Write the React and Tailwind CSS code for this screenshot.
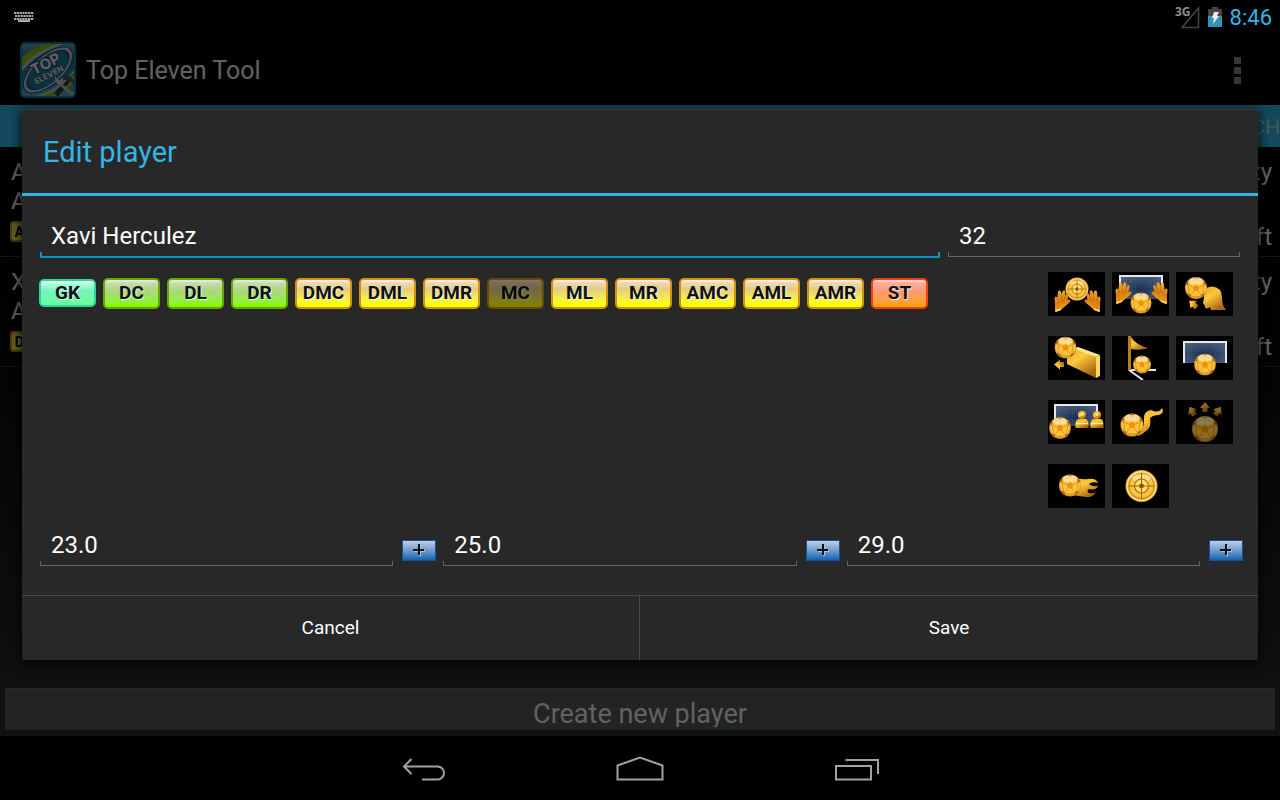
import React, { useState } from "react";

const positions = [
  { id: "GK", kind: "keeper" },
  { id: "DC", kind: "defence" },
  { id: "DL", kind: "defence" },
  { id: "DR", kind: "defence" },
  { id: "DMC", kind: "midfield" },
  { id: "DML", kind: "midfield" },
  { id: "DMR", kind: "midfield" },
  { id: "MC", kind: "midfield" },
  { id: "ML", kind: "midfield" },
  { id: "MR", kind: "midfield" },
  { id: "AMC", kind: "midfield" },
  { id: "AML", kind: "midfield" },
  { id: "AMR", kind: "midfield" },
  { id: "ST", kind: "attack" },
];

const badgeStyles = {
  keeper:
    "h-7 border-[#2fd596] bg-linear-to-b from-[#b4ffe0] from-10% via-[#74f3bd] via-40% to-[#68ff9e] to-95%",
  defence:
    "h-[31px] border-[#62a800] bg-linear-to-b from-[#d0dcb8] from-5% via-[#abd67c] via-40% to-[#86f800] to-90%",
  midfield:
    "h-[31px] border-[#d0920c] bg-linear-to-b from-[#eedcc4] from-5% via-[#e6cc7c] via-35% to-[#ffff00] to-85%",
  attack:
    "h-[31px] border-[#f4400c] bg-linear-to-b from-[#ffb0a8] from-5% via-[#ff9a70] via-45% to-[#ffa212] to-90%",
};

const players = [
  { name: "A", team: "A", position: "AMC", skill: "ty", foot: "ft" },
  { name: "X", team: "A", position: "DMC", skill: "ty", foot: "ft" },
];

const Ball = ({ cx, cy, r }) => (
  <g transform={`translate(${cx} ${cy}) scale(${r / 10})`}>
    <circle r="10" fill="url(#ball)" />
    <path d="M0-3.2 3-1 1.9 2.7H-1.9L-3-1Z" fill="#f0900c" />
    <path
      d="M-3-9.5 0-7.6 3-9.5ZM9.4-3.4 7.2-2.6 6.6-6 8-6ZM8.4 5.4 6 5 4 7.6 5.6 8.3ZM-8.4 5.4-6 5-4 7.6-5.6 8.3ZM-9.4-3.4-7.2-2.6-6.6-6-8-6Z"
      fill="#b8650a"
    />
    <path
      d="M0-7.6V-3.2M3-1 7.2-2.6M1.9 2.7 4.6 6.4M-1.9 2.7-4.6 6.4M-3-1-7.2-2.6M-6.6-6 0-7.6 6.6-6M7.2-2.6 6 5M4 7.6H-4M-7.2-2.6-6 5"
      fill="none"
      stroke="#d8901a"
      strokeWidth="0.8"
    />
    <ellipse cy="-6" rx="6.5" ry="3" fill="#fff" opacity="0.5" />
  </g>
);

const Target = ({ cx, cy, r }) => (
  <g transform={`translate(${cx} ${cy}) scale(${r / 10})`}>
    <circle r="10" fill="#d9a438" />
    <circle r="9" fill="url(#ball)" stroke="#ffe58c" strokeWidth="0.8" />
    <circle r="7.8" fill="none" stroke="#c88a1c" strokeWidth="0.6" />
    <ellipse cy="-5" rx="6" ry="2.5" fill="#fff" opacity="0.4" />
    <circle r="4.4" fill="#ffdf6a" stroke="#a8660d" strokeWidth="0.7" />
    <path d="M0-8V8M-8 0H8" stroke="#9a600f" strokeWidth="0.6" />
    <circle r="1.5" fill="#8b5409" />
  </g>
);

const Glove = ({ x, y, flip }) => (
  <g transform={`translate(${x} ${y}) scale(${flip ? -1 : 1} 1)`}>
    <path
      d="M1 19 1 12Q-.5 7 2 6.500L3.500 7.500 4 2Q5-.5 7 1.500L7.500 4.500 8.500 1.500Q10.500-1 11.500 2L11 6 12.500 3.500Q14.500 2 14.800 4.500L13.500 9.500 15 9.500Q18 10 15 13L9 18 7 20 1 22Z"
      fill="url(#glove)"
    />
    <path d="M3 18 7 19M3.500 8 5 12M7.500 5 7.500 11M11 6 9.500 12" stroke="#b85f08" strokeWidth="0.6" />
    <path d="M1 20 7 18 7 20 2 22Z" fill="#ffd25c" />
  </g>
);

const Goal = ({ x, y, height }) => (
  <g transform={`translate(${x} ${y})`}>
    <path d={`M1 1H43V${height}H1Z`} fill="url(#net)" />
    <path d={`M1 1H43V${height}H1Z`} fill="url(#mesh)" />
    <path d={`M1 ${height}V1H43V${height}`} fill="none" stroke="#e4e9f2" strokeWidth="2" />
  </g>
);

const Arrow = ({ x, y, angle }) => (
  <path
    d="M0-5 5 1H2.5V5H-2.5V1H-5Z"
    transform={`translate(${x} ${y}) rotate(${angle})`}
    fill="url(#gold)"
  />
);

const Fan = ({ x }) => (
  <g transform={`translate(${x} 11)`}>
    <circle cx="7" cy="4" r="4" fill="url(#gold)" />
    <circle cx="7" cy="3.5" r="1.5" fill="#ffe48a" />
    <path d="M3 8H11Q13 9 13.5 12V17H.5V12Q1 9 3 8Z" fill="url(#gold)" />
    <path d="M1 12.5H13" stroke="#fff0a0" strokeWidth="1.4" />
  </g>
);

const skills = [
  {
    name: "Shot stopper",
    art: (
      <>
        <Target cx={29} cy={17} r={11.5} />
        <Glove x={6} y={18} />
        <Glove x={53} y={18} flip />
      </>
    ),
  },
  {
    name: "Penalty stopper",
    art: (
      <>
        <Goal x={7} y={3} height={24} />
        <Glove x={3} y={10} />
        <Glove x={56} y={10} flip />
        <Ball cx={29} cy={31} r={10.5} />
      </>
    ),
  },
  {
    name: "Aerial presence",
    art: (
      <>
        <path
          d="M28 26Q26 15 36 14.5 46 15 46 26 46 33 50 38H35L34 35Q30 38 29 35L28 32 27 31Z"
          fill="url(#gold)"
        />
        <Ball cx={20} cy={16} r={11} />
        <Arrow x={17} y={32} angle={-50} />
      </>
    ),
  },
  {
    name: "Defensive wall",
    art: (
      <>
        <path d="M19 16 30 11 48 21V42L19 28Z" fill="url(#gold)" />
        <path d="M48 21 52 19V40L48 42Z" fill="#ffd95a" />
        <path d="M26 13 30 11 52 19 48 21Z" fill="#ffe78a" />
        <Ball cx={17.5} cy={11.5} r={10.8} />
        <Arrow x={11} y={28.5} angle={-90} />
      </>
    ),
  },
  {
    name: "Corner specialist",
    art: (
      <>
        <path d="M17 34H44M17 34 31 44" stroke="#dfe4f0" strokeWidth="2" />
        <path d="M16 0H19V34H16Z" fill="#b97f1c" />
        <path d="M19 1Q24 9 36 12 29 15 19 13Z" fill="url(#gold)" />
        <Ball cx={30} cy={28.5} r={9} />
      </>
    ),
  },
  {
    name: "Penalty kick specialist",
    art: (
      <>
        <Goal x={7} y={5} height={22} />
        <Ball cx={29} cy={28.5} r={10.8} />
      </>
    ),
  },
  {
    name: "Free kick specialist",
    art: (
      <>
        <Goal x={6} y={4} height={22} />
        <Fan x={27} />
        <Fan x={42} />
        <Ball cx={12} cy={28} r={10.8} />
      </>
    ),
  },
  {
    name: "Dribbler",
    art: (
      <>
        <path
          d="M26 34Q33 27 32 20 31 11 39 10 47 14 50 8 53 13 47 15 41 15 38 18 40 27 34 31 30 35 26 36Z"
          fill="url(#gold)"
        />
        <Ball cx={20} cy={25} r={11.5} />
      </>
    ),
  },
  {
    name: "Playmaker",
    off: true,
    art: (
      <>
        <Ball cx={29} cy={29} r={13} />
        <Arrow x={16} y={11} angle={-32} />
        <Arrow x={29} y={7} angle={0} />
        <Arrow x={42} y={11} angle={32} />
      </>
    ),
  },
  {
    name: "Shadow striker",
    art: (
      <>
        <path
          d="M24 13Q34 16 40 15 48 14 50 19 44 17 41 20 44 23 50 22 48 27 41 25 38 27 41 29 46 30 48 28 45 34 38 33L24 31Z"
          fill="url(#gold)"
        />
        <Ball cx={22} cy={21.5} r={11} />
      </>
    ),
  },
  { name: "One-on-one scorer", art: <Target cx={29.5} cy={22} r={16} /> },
];

// Gradients used by every skill tile
const SkillPaints = () => (
  <svg className="absolute size-0" aria-hidden="true">
    <defs>
      <radialGradient id="ball" cx="50%" cy="45%" r="55%">
        <stop offset="0" stopColor="#ffc62e" />
        <stop offset="0.75" stopColor="#fcc444" />
        <stop offset="1" stopColor="#c98a1c" />
      </radialGradient>
      <linearGradient id="gold" x1="0" y1="0" x2="0.6" y2="1">
        <stop offset="0" stopColor="#e0a52a" />
        <stop offset="0.45" stopColor="#ffc93e" />
        <stop offset="1" stopColor="#a8660f" />
      </linearGradient>
      <linearGradient id="glove" x1="0" y1="0" x2="0.3" y2="1">
        <stop offset="0" stopColor="#f3b03c" />
        <stop offset="0.6" stopColor="#d97d10" />
        <stop offset="1" stopColor="#f0a520" />
      </linearGradient>
      <radialGradient id="net" cx="50%" cy="60%" r="65%">
        <stop offset="0" stopColor="#122c54" />
        <stop offset="1" stopColor="#4c5a74" />
      </radialGradient>
      <pattern id="mesh" width="2" height="2" patternUnits="userSpaceOnUse">
        <path d="M0 0H1V1H0Z" fill="#8ea0bf" opacity="0.15" />
      </pattern>
    </defs>
  </svg>
);

const AppLogo = () => (
  <svg className="size-[58px]" viewBox="0 0 58 58" aria-hidden="true">
    <defs>
      <linearGradient id="logo" x1="0" y1="0" x2="0" y2="1">
        <stop offset="0" stopColor="#6f9fbc" />
        <stop offset="0.3" stopColor="#1f6f9a" />
        <stop offset="0.7" stopColor="#1a86a8" />
        <stop offset="1" stopColor="#5fb0c4" />
      </linearGradient>
      <clipPath id="logoClip">
        <rect x="3" y="3" width="52" height="52" rx="2" />
      </clipPath>
    </defs>
    <rect x="2" y="2" width="54" height="54" rx="4" fill="url(#logo)" stroke="#0a789f" strokeWidth="2" />
    <g clipPath="url(#logoClip)">
      <path d="M2 30Q14 10 42 2H30Q10 8 2 18Z" fill="#8fb81c" />
      <path d="M2 32Q16 12 48 2H42Q14 10 2 28Z" fill="#b5d0b8" />
      <path d="M18 56Q44 50 56 32V40Q48 50 38 56Z" fill="#8fb81c" />
      <path d="M14 56Q42 48 56 27V30Q44 50 20 56Z" fill="#b5d0b8" />
      <g transform="rotate(-42 29 29)">
        <ellipse cx="29" cy="29" rx="31" ry="15" fill="#124f6c" />
        <ellipse cx="29" cy="29" rx="30" ry="14" fill="#c6ccd4" />
        <ellipse cx="29" cy="29" rx="27" ry="12.5" fill="#155a7c" />
        <ellipse cx="29" cy="29" rx="24" ry="12.5" fill="#1b7c9c" />
      </g>
      <g
        transform="rotate(-27 28 28)"
        fill="#e8e8ee"
        fontFamily="Inter, sans-serif"
        fontWeight="800"
        textAnchor="middle"
      >
        <text x="29" y="28" fontSize="15" stroke="#0d3e58" strokeWidth="2" paintOrder="stroke">
          TOP
        </text>
        <text x="27" y="37" fontSize="8" stroke="#0d3e58" strokeWidth="1" paintOrder="stroke">
          ELEVEN
        </text>
      </g>
      <path d="M52 37 44 46" stroke="#25313b" strokeWidth="3" />
      <path d="M44 46 37 54" stroke="#20395f" strokeWidth="5" />
      <path d="M43 35 50 35Q55 37 55 43L51 40 46 39Z" fill="#4b5359" />
      <path d="M39 41 54 54" stroke="#b4babd" strokeWidth="3" />
      <path d="M36 35V40L40 44 44 41V36L41 39H39Z" fill="#c5cbd0" />
    </g>
  </svg>
);

const StatusBar = () => (
  <header className="flex h-[34px] items-center justify-between bg-black pr-2 pl-[14px]">
    <svg className="h-3 w-5" viewBox="0 0 20 12" aria-label="Keyboard connected">
      <path d="M0 2H20M1 5H19M0 8H20" stroke="#a8a8a8" strokeWidth="2" strokeDasharray="2.2 0.6" />
      <path d="M4 10H16" stroke="#a8a8a8" strokeWidth="2" />
    </svg>
    <div className="flex items-center pt-px">
      <svg className="h-6 w-[25px]" viewBox="0 0 25 24" aria-label="3G, no signal">
        <text x="0" y="10" fontSize="12" fontWeight="bold" fontFamily="Open Sans, sans-serif" fill="#8c8c8c">
          3G
        </text>
        <path d="M7 21.5H23.500V2Z" fill="none" stroke="#454545" strokeWidth="1.5" />
      </svg>
      <svg className="mr-2 ml-2 h-[22px] w-[14px]" viewBox="0 0 14 22" aria-label="Battery charging">
        <path d="M4 0H10V2H14V10H0V2H4Z" fill="#454545" />
        <path d="M0 9H14V20H0Z" fill="#3392b8" />
        <path d="M6 5H11L9 9H11L5 17 6 11H4Z" fill="#eee" />
      </svg>
      <span className="text-[22px] leading-[33px] text-[#33b5e5]">8:46</span>
    </div>
  </header>
);

const NavBar = () => (
  <footer className="flex h-16 items-center justify-center gap-[132px] bg-black pt-1">
    <button aria-label="Back" className="flex w-[85px] justify-center">
      <svg className="h-7 w-12" viewBox="0 0 48 28" fill="none" stroke="#a3a3a3" strokeWidth="2">
        <path d="M12.5 3 5 10.500 12.5 18M5 10.500H38.500A6.500 6.500 0 0 1 38.500 23.500H23" />
      </svg>
    </button>
    <button aria-label="Home" className="flex w-[85px] justify-center">
      <svg className="h-7 w-12" viewBox="0 0 48 28" fill="none" stroke="#a3a3a3" strokeWidth="2">
        <path d="M1.500 23.500V9.500L24 1.500 46.500 9.500V23.500Z" />
      </svg>
    </button>
    <button aria-label="Recent apps" className="flex w-[85px] justify-center">
      <svg className="h-7 w-12" viewBox="0 0 48 28" fill="none" stroke="#a3a3a3" strokeWidth="2">
        <path d="M3 10H38V23.500H3ZM12.500 4H45V18" />
      </svg>
    </button>
  </footer>
);

const PlayerList = () => (
  <ul>
    {players.map((player, index) => (
      <li
        key={index}
        className="flex h-[110px] justify-between border-b border-[#33363a] pt-[11px] pr-2 pb-1 pl-[11px] text-2xl leading-[29px] text-[#f3f3f3]"
      >
        <div className="flex flex-col items-start">
          <span>{player.name}</span>
          <span>{player.team}</span>
          <span className="mt-[5px] -ml-px flex h-[21px] w-10 items-center justify-center rounded border-2 border-[#c98a0c] bg-linear-to-b from-[#ead67a] to-[#ffff00] text-sm font-bold text-black">
            {player.position}
          </span>
        </div>
        <div className="flex flex-col items-end justify-between">
          <span>{player.skill}</span>
          <span>{player.foot}</span>
        </div>
      </li>
    ))}
  </ul>
);

const Field = ({ label, value, onChange, active }) => (
  <label className="block min-w-0 flex-1">
    <input
      aria-label={label}
      value={value}
      onChange={(e) => onChange(e.target.value)}
      className="block h-8 w-full bg-transparent px-[11px] text-2xl text-white outline-none"
    />
    <span
      className={
        active
          ? "block h-[6px] border-x-2 border-b-2 border-[#0a94c4]"
          : "block h-[5px] border-x border-b border-[#666]"
      }
    />
  </label>
);

const EditPlayerDialog = () => {
  const [player, setPlayer] = useState({ name: "Xavi Herculez", age: "32" });
  const [values, setValues] = useState(["23.0", "25.0", "29.0"]);
  const [offPositions, setOffPositions] = useState(["MC"]);
  const [offSkills, setOffSkills] = useState(skills.filter((s) => s.off).map((s) => s.name));

  const toggle = (list, item) =>
    list.includes(item) ? list.filter((i) => i !== item) : [...list, item];

  const setValue = (index, value) => {
    setValues(values.map((v, i) => (i === index ? value : v)));
  };

  return (
    <section
      role="dialog"
      aria-labelledby="dialog-title"
      className="w-full rounded-xs bg-[#282828] shadow-[0_2px_10px_2px_rgba(0,0,0,0.7)] inset-shadow-[0_1px_0_#3a3a3a]"
    >
      <h2
        id="dialog-title"
        className="border-b-3 border-[#33b5e5] px-[21px] pt-[2px] text-[29px] leading-[82px] text-[#33b5e5]"
      >
        Edit player
      </h2>

      <div className="flex items-start px-[18px] pt-6">
        <Field
          label="Name"
          active
          value={player.name}
          onChange={(name) => setPlayer({ ...player, name })}
        />
        <div className="flex w-1/4 pl-2">
          <Field label="Age" value={player.age} onChange={(age) => setPlayer({ ...player, age })} />
        </div>
      </div>

      <div className="flex items-start justify-between pt-[14px] pr-[25px] pl-[17px]">
        <div className="flex flex-wrap items-center gap-[7px] pt-[6px]">
          {positions.map((item) => (
            <button
              key={item.id}
              aria-pressed={!offPositions.includes(item.id)}
              onClick={() => setOffPositions(toggle(offPositions, item.id))}
              className={`w-[57px] rounded-[5px] border-2 text-[19px] leading-6 font-bold text-[#111] text-shadow-[1px_1px_1px_rgba(255,255,255,0.8)] inset-shadow-[0_2px_1px_rgba(255,255,255,0.4)] ${
                badgeStyles[item.kind]
              } ${offPositions.includes(item.id) ? "brightness-50" : ""}`}
            >
              {item.id}
            </button>
          ))}
        </div>
        <div className="grid shrink-0 grid-cols-3 gap-x-[7px] gap-y-5">
          {skills.map((skill) => (
            <button
              key={skill.name}
              aria-label={skill.name}
              aria-pressed={!offSkills.includes(skill.name)}
              onClick={() => setOffSkills(toggle(offSkills, skill.name))}
              className="bg-black"
            >
              <svg
                viewBox="0 0 57 44"
                className={`h-11 w-[57px] ${offSkills.includes(skill.name) ? "opacity-55" : ""}`}
              >
                {skill.art}
              </svg>
            </button>
          ))}
        </div>
      </div>

      <div className="flex gap-[7px] pt-[21px] pr-[15px] pb-[29px] pl-[18px]">
        {values.map((value, index) => (
          <div key={index} className="flex flex-1 items-end gap-[9px]">
            <Field
              label={`Value ${index + 1}`}
              value={value}
              onChange={(v) => setValue(index, v)}
            />
            <button
              aria-label="Increase"
              onClick={() => setValue(index, (Number(value) + 1).toFixed(1))}
              className="mb-[5px] flex h-[21px] w-[34px] items-center justify-center border border-[#1552a0] bg-linear-to-b from-[#c4cce8] via-[#6f9ccb] to-[#0464b4]"
            >
              <svg className="size-3" viewBox="0 0 12 12" strokeWidth="2">
                <path d="M7 1V12M1 7H12" stroke="#a4c4e4" />
                <path d="M6 0V11M0 6H11" stroke="#111" />
              </svg>
            </button>
          </div>
        ))}
      </div>

      <div className="grid h-[65px] grid-cols-2 border-t border-[#4a4a4a] text-[19px] text-white">
        <button className="border-r border-[#4a4a4a] pt-[2px]">Cancel</button>
        <button className="pt-[2px]">Save</button>
      </div>
    </section>
  );
};

const App = () => {
  return (
    <div className="flex min-h-screen flex-col bg-black font-[Roboto,sans-serif]">
      <StatusBar />
      <main className="relative flex flex-1 flex-col bg-linear-to-b from-black to-[#2a2e33]">
        <div className="flex h-[71px] items-center gap-[9px] bg-black pt-px pr-[39px] pl-[19px] text-[25px] text-[#f3f3f3]">
          <AppLogo />
          <h1 className="flex-1 pt-[2px]">Top Eleven Tool</h1>
          <button aria-label="More options" className="flex flex-col gap-[3px]">
            <span className="size-[7px] bg-[#888]" />
            <span className="size-[7px] bg-[#888]" />
            <span className="size-[7px] bg-[#888]" />
          </button>
        </div>
        <div className="flex h-[42px] items-center justify-end bg-[#33b5e5] pt-1 text-[21px] text-[#a8d8e8]">
          CH
        </div>
        <PlayerList />
        <button className="mx-[5px] mt-auto mb-[6px] h-[42px] rounded-xs border-t-2 border-[#606264] bg-[#555759] pt-[2px] text-[27px] leading-9 text-[#f3f3f3]">
          <span className="block h-[31px] overflow-hidden">Create new player</span>
        </button>

        <div className="absolute inset-0 bg-black/60" />
        <div className="absolute inset-0 flex items-center px-[22px] pb-[2px]">
          <EditPlayerDialog />
        </div>
      </main>
      <NavBar />
      <SkillPaints />
    </div>
  );
};

export default App;
